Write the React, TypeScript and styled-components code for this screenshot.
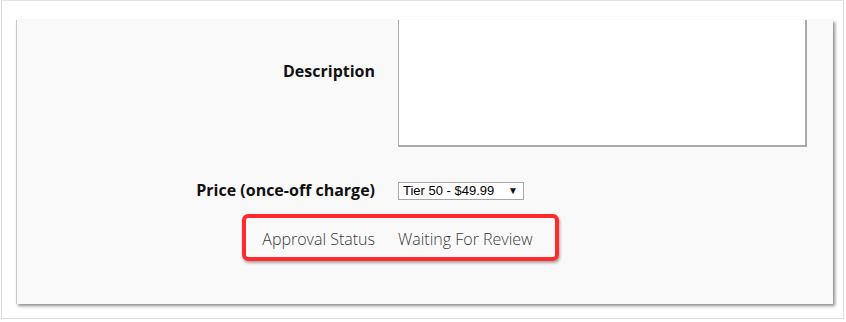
import React from 'react';
import styled, { createGlobalStyle } from 'styled-components';

const GlobalStyle = createGlobalStyle`
  html, body {
    margin: 0;
    padding: 0;
    background: #ffffff;
  }
  body {
    font-family: "Open Sans", "Liberation Sans", sans-serif;
  }
`;

export const Frame = styled.div`
  box-sizing: border-box;
  margin-left: 1px;
  width: 843px;
  height: 319px;
  border: 1px solid #dcdcdc;
  border-top-color: #e4e4e4;
  padding: 19px 0 0 14px;
  background: #fff;
`;

export const Panel = styled.section`
  position: relative;
  box-sizing: border-box;
  width: 817px;
  height: 284px;
  background: #f9f9f9;
  border-left: 1px solid #c8c8c8;
  box-shadow: 2px 2px 3px rgba(0, 0, 0, 0.45);
  display: grid;
  grid-template-columns: 358px 409px;
  column-gap: 23px;
  align-content: start;
`;

export const Label = styled.div<{ bold?: boolean; top?: number }>`
  text-align: right;
  font-size: 16px;
  font-weight: ${(p) => (p.bold ? 700 : 300)};
  color: ${(p) => (p.bold ? '#111' : '#3a3a3a')};
  padding-top: ${(p) => p.top ?? 0}px;
  line-height: 20px;
  white-space: nowrap;
`;

export const Value = styled.div<{ top?: number }>`
  padding-top: ${(p) => p.top ?? 0}px;
  font-size: 16px;
  font-weight: 300;
  color: #3a3a3a;
  line-height: 20px;
  white-space: nowrap;
`;

export const TextArea = styled.div`
  box-sizing: border-box;
  height: 127px;
  background: #fff;
  border: 2px solid #a9a9a9;
  border-top: none;
  border-left-width: 1px;
  border-bottom-width: 2px;
`;

export const Select = styled.div`
  box-sizing: border-box;
  display: inline-flex;
  align-items: center;
  justify-content: space-between;
  width: 126px;
  height: 18px;
  padding: 0 5px 0 4px;
  background: #fff;
  border: 1px solid #a6a6a6;
  font-family: "Liberation Sans", Arial, sans-serif;
  font-size: 13px;
  font-weight: 400;
  color: #000;
  line-height: 16px;
`;

export const Arrow = styled.span`
  font-size: 10px;
  color: #111;
`;

export const Highlight = styled.div`
  position: absolute;
  left: 225px;
  top: 194px;
  width: 317px;
  height: 47px;
  box-sizing: border-box;
  border: 4px solid #fe2a2e;
  border-radius: 6px;
  box-shadow: 1px 2px 3px rgba(0, 0, 0, 0.35);
  pointer-events: none;
`;

export default function App() {
  return (
    <>
      <GlobalStyle />
      <Frame>
        <Panel>
          <Label bold top={41}>Description</Label>
          <TextArea />

          <Label bold top={33}>Price (once-off charge)</Label>
          <Value top={32}>
            <Select>
              <span>Tier 50 - $49.99</span>
              <Arrow>▼</Arrow>
            </Select>
          </Value>

          <Label top={29}>Approval Status</Label>
          <Value top={29}>Waiting For Review</Value>

          <Highlight />
        </Panel>
      </Frame>
    </>
  );
}
